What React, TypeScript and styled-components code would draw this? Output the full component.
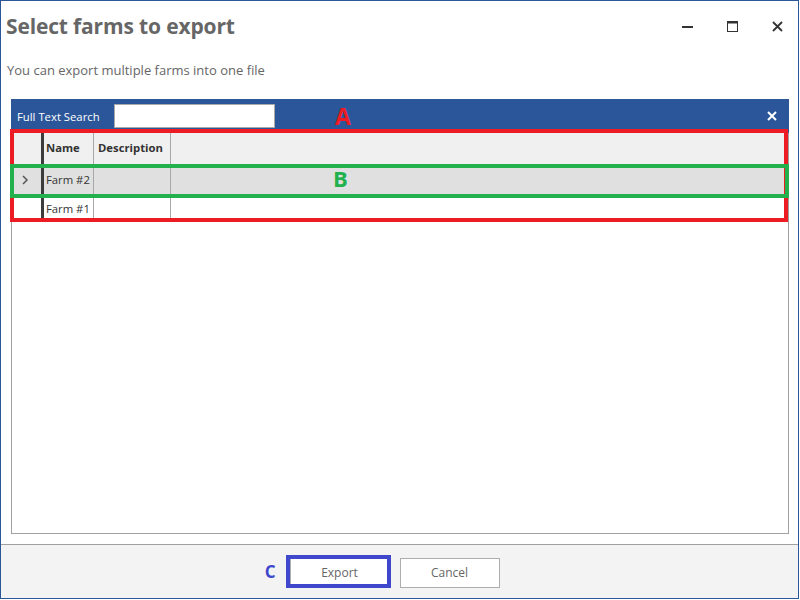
import React from 'react';
import styled, { createGlobalStyle } from 'styled-components';

const Global = createGlobalStyle`
  html, body { margin: 0; padding: 0; background: #fff; }
  body { font-family: "Open Sans", "Noto Sans", sans-serif; }
`;

const Window = styled.div`
  position: relative;
  box-sizing: border-box;
  width: 799px;
  height: 599px;
  border: 1px solid #2b579a;
  display: flex;
  flex-direction: column;
  background: #fff;
`;

const TitleBar = styled.div`
  box-sizing: border-box;
  flex: none;
  height: 54px;
  padding: 0 0 4px 5px;
  display: flex;
  align-items: center;
`;

const Title = styled.h1`
  margin: 0;
  flex: 1;
  font-size: 21px;
  font-weight: 700;
  color: #666;
  letter-spacing: -0.15px;
`;

const Controls = styled.div`
  display: flex;
  align-items: center;
  height: 100%;
`;

const CtrlButton = styled.div`
  box-sizing: border-box;
  width: 45px;
  height: 100%;
  padding-left: 3px;
  display: flex;
  align-items: center;
  justify-content: center;
  color: #333;
`;

const Subtitle = styled.div`
  box-sizing: border-box;
  flex: none;
  height: 44px;
  padding: 5px 0 0 6px;
  font-size: 13px;
  line-height: 20px;
  color: #666;
`;

const Panel = styled.div`
  position: relative;
  flex: 1;
  margin: 0 9px 10px 10px;
  display: flex;
  flex-direction: column;
`;

const Toolbar = styled.div`
  height: 34px;
  background: #2b579a;
  display: flex;
  align-items: center;
  padding: 0 12px 0 6px;
  color: #fff;
`;

const SearchLabel = styled.span`
  font-size: 11.3px;
  color: #fff;
  width: 97px;
`;

const SearchInput = styled.input`
  box-sizing: border-box;
  width: 161px;
  height: 24px;
  border: 1px solid #a9a9a9;
  background: #fff;
  outline: none;
  padding: 0 4px;
`;

const Spacer = styled.div`
  flex: 1;
`;

const Grid = styled.div`
  flex: 1;
  border: 1px solid #a0a0a0;
  border-top: none;
  background: #fff;
  display: flex;
  flex-direction: column;
`;

const Row = styled.div<{ $height: number; $bg: string; $lift?: number }>`
  box-sizing: border-box;
  display: grid;
  grid-template-columns: 29px 53px 77px 1fr;
  height: ${(p) => p.$height}px;
  background: ${(p) => p.$bg};
  & > * {
    padding-bottom: ${(p) => p.$lift ?? 0}px;
  }
`;

const RowHeaderCell = styled.div`
  display: flex;
  align-items: center;
  justify-content: center;
  padding-right: 4px;
  color: #555;
`;

const Cell = styled.div<{ $frozen?: boolean; $lined?: boolean; $bold?: boolean }>`
  box-sizing: border-box;
  display: flex;
  align-items: center;
  padding-left: ${(p) => (p.$frozen ? 2 : 4)}px;
  border-left: ${(p) => (p.$frozen ? '3px solid #3c3c3c' : 'none')};
  border-right: ${(p) => (p.$lined ? '1px solid #a8a8a8' : 'none')};
  font-size: 11.3px;
  font-weight: ${(p) => (p.$bold ? 700 : 400)};
  color: #333;
  white-space: nowrap;
  overflow: hidden;
`;

const Footer = styled.div`
  box-sizing: border-box;
  flex: none;
  height: 54px;
  border-top: 1px solid #a0a0a0;
  background: #f3f3f3;
  display: flex;
  align-items: center;
  justify-content: center;
  gap: 10px;
  padding: 2px 10px 0 0;
`;

const ButtonWrap = styled.div`
  position: relative;
`;

const Button = styled.button`
  box-sizing: border-box;
  width: 100px;
  height: 30px;
  background: #fff;
  border: 1px solid #adadad;
  font-family: "Open Sans", "Noto Sans", sans-serif;
  font-size: 12px;
  color: #666;
  padding: 0;
  cursor: pointer;
`;

const AnnotBox = styled.div<{ $color: string }>`
  position: absolute;
  box-sizing: border-box;
  border: 4px solid ${(p) => p.$color};
  pointer-events: none;
`;

const AnnotLabel = styled.span<{ $color: string; $size: number }>`
  position: absolute;
  font-family: "Open Sans", "Noto Sans", sans-serif;
  font-weight: 700;
  font-size: ${(p) => p.$size}px;
  line-height: 1;
  color: ${(p) => p.$color};
  pointer-events: none;
`;

const Chevron = () => (
  <svg width="8" height="10" viewBox="0 0 8 10">
    <polyline points="2,1 6,5 2,9" fill="none" stroke="#555" strokeWidth="1.5" />
  </svg>
);

export default function App() {
  return (
    <>
      <Global />
      <Window>
        <TitleBar>
          <Title>Select farms to export</Title>
          <Controls>
            <CtrlButton>
              <svg width="11" height="11" viewBox="0 0 11 11">
                <rect x="0" y="5" width="11" height="2" fill="#333" />
              </svg>
            </CtrlButton>
            <CtrlButton>
              <svg width="11" height="11" viewBox="0 0 11 11">
                <rect x="0.5" y="0.5" width="10" height="10" fill="none" stroke="#333" strokeWidth="1" />
                <rect x="0" y="0" width="11" height="2.5" fill="#333" />
              </svg>
            </CtrlButton>
            <CtrlButton>
              <svg width="11" height="11" viewBox="0 0 11 11">
                <path d="M1 1 L10 10 M10 1 L1 10" stroke="#333" strokeWidth="1.8" />
              </svg>
            </CtrlButton>
          </Controls>
        </TitleBar>
        <Subtitle>You can export multiple farms into one file</Subtitle>
        <Panel>
          <Toolbar>
            <SearchLabel>Full Text Search</SearchLabel>
            <SearchInput />
            <Spacer />
            <svg width="10" height="10" viewBox="0 0 10 10">
              <path d="M1 1 L9 9 M9 1 L1 9" stroke="#fff" strokeWidth="2" />
            </svg>
          </Toolbar>
          <Grid>
            <Row $height={32} $bg="#f0f0f0" $lift={3}>
              <RowHeaderCell />
              <Cell $frozen $lined $bold>Name</Cell>
              <Cell $lined $bold>Description</Cell>
              <Cell />
            </Row>
            <Row $height={29} $bg="#e0e0e0">
              <RowHeaderCell>
                <Chevron />
              </RowHeaderCell>
              <Cell $frozen $lined>Farm #2</Cell>
              <Cell $lined />
              <Cell />
            </Row>
            <Row $height={28} $bg="#fff">
              <RowHeaderCell />
              <Cell $frozen $lined>Farm #1</Cell>
              <Cell $lined />
              <Cell />
            </Row>
          </Grid>
          <AnnotBox $color="#ed1c24" style={{ left: -1, top: 30, width: 778, height: 93 }} />
          <AnnotBox $color="#22b14c" style={{ left: -1, top: 65, width: 779, height: 34 }} />
          <AnnotLabel $color="#ed1c24" $size={23} style={{ left: 324, top: 6 }}>A</AnnotLabel>
          <AnnotLabel $color="#22b14c" $size={22} style={{ left: 322, top: 68 }}>B</AnnotLabel>
        </Panel>
        <Footer>
          <ButtonWrap>
            <Button>Export</Button>
            <AnnotBox $color="#3f48cc" style={{ left: -4, top: -3, right: -1, bottom: 0 }} />
            <AnnotLabel $color="#3f48cc" $size={17} style={{ right: 114, top: 5 }}>C</AnnotLabel>
          </ButtonWrap>
          <Button>Cancel</Button>
        </Footer>
      </Window>
    </>
  );
}
